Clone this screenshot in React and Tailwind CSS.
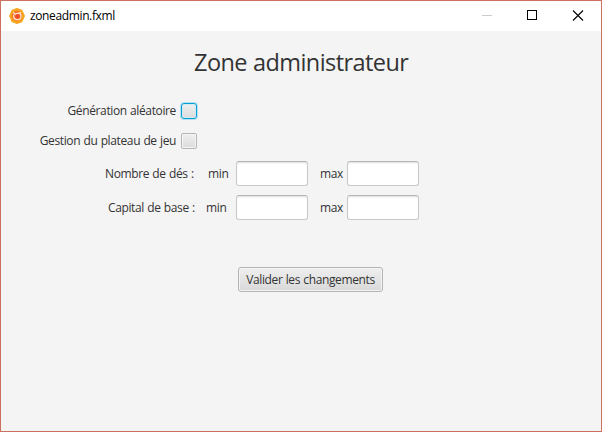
function AppIcon() {
  return (
    <svg width="16" height="16" viewBox="0 0 16 16" className="shrink-0">
      <path d="M8 .7 12.8 2.4 15.3 8 12.8 13.6 8 15.3 3.2 13.6.7 8 3.2 2.4Z" fill="#f9a01f" stroke="#f9a823" strokeWidth="1.3" strokeLinejoin="round" />
      <circle cx="8" cy="8" r="5" fill="#f4742b" />
      <circle cx="8.4" cy="8.3" r="2.2" fill="#ee4a2c" />
      <path d="M4.7 6.8c-.4 3 1 4.9 3.6 5 2.7 0 3.9-1.9 3.7-4.2-.2-1.6-1.6-2.6-3.4-2.4-1 0-1.8.5-2.4 1.1L4.2 4.4M10.6 5.6l1.4-1.5" fill="none" stroke="#fff0e2" strokeWidth="1.1" />
    </svg>
  );
}

function CheckBox({ focused = false }) {
  return (
    <span
      className={
        "size-4 shrink-0 border bg-linear-to-b from-[#efefef] to-[#dcdcdc] " +
        (focused
          ? "rounded-[3px] border-[#039ed3] shadow-[0_0_0_1px_#b5e1f1,inset_0_0_0_1px_#d4eaf2]"
          : "rounded-[2px] border-[#b5b5b5] shadow-[inset_0_0_0_1px_#f5f5f5]")
      }
    />
  );
}

function Field({ label }) {
  return (
    <input
      aria-label={label}
      className="h-[25px] w-[72px] shrink-0 rounded-[3px] border border-[#c8c8c8] border-t-[#b6b6b6] bg-white shadow-[inset_0_2px_2px_-1px_#dedede] outline-none"
    />
  );
}

export default function App() {
  return (
    <div className="flex h-[432px] w-[602px] flex-col overflow-hidden border border-[#cc705f] bg-[#f4f4f4] font-['Open_Sans','Noto_Sans',sans-serif] text-[12px] leading-4 tracking-[-0.37px] whitespace-nowrap text-[#333333] [word-spacing:0.5px]">
      <header className="flex h-[30px] shrink-0 items-center bg-white pl-2 text-black">
        <AppIcon />
        <span className="ml-[5px]">zoneadmin.fxml</span>
        <svg width="138" height="30" viewBox="0 0 138 30" fill="none" shapeRendering="crispEdges" className="ml-auto">
          <path d="M19 14.5h10" stroke="#cccccc" />
          <path d="M64.5 9.5h9v9h-9z" stroke="#000" />
          <path d="m110 9.5 10 10m0-10-10 10" stroke="#000" strokeWidth="1.1" shapeRendering="auto" />
        </svg>
      </header>
      <main className="flex flex-col">
        <h1 className="mt-[15px] ml-[193px] text-[23.5px] leading-8 tracking-[-0.57px]">Zone administrateur</h1>
        <div className="mt-[25px] flex h-4 w-[196px] items-center justify-end">
          <span className="mr-[5px]">Génération aléatoire</span>
          <CheckBox focused />
        </div>
        <div className="mt-3.5 flex h-4 w-[196px] items-center justify-end">
          <span className="mr-[5px]">Gestion du plateau de jeu</span>
          <CheckBox />
        </div>
        <div className="mt-3 flex items-center pl-[104px]">
          <span className="w-[103px]">Nombre de dés :</span>
          <span className="w-7">min</span>
          <Field label="Nombre de dés min" />
          <span className="ml-3 w-[27px]">max</span>
          <Field label="Nombre de dés max" />
        </div>
        <div className="mt-[9px] flex items-center pl-[107px]">
          <span className="w-[98px]">Capital de base :</span>
          <span className="w-[30px]">min</span>
          <Field label="Capital de base min" />
          <span className="ml-3 w-[27px]">max</span>
          <Field label="Capital de base max" />
        </div>
        <button className="mt-[47px] ml-[237px] flex h-[25px] w-[145px] items-center justify-center rounded-[3px] border border-[#b5b5b5] bg-linear-to-b from-[#efefef] to-[#d9d9d9] tracking-[-0.37px] shadow-[inset_0_0_0_1px_#f3f3f3] [word-spacing:0.5px]">
          Valider les changements
        </button>
      </main>
    </div>
  );
}
